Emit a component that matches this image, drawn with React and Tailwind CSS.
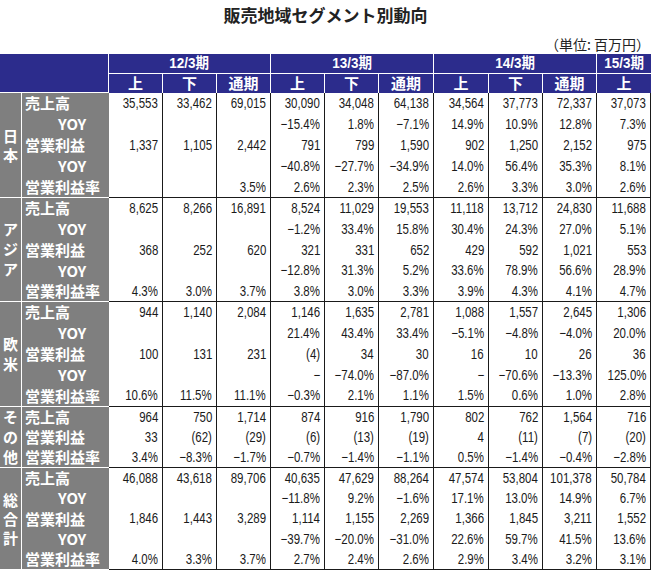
import React from "react";

const sections = [
  {
    region: ["日", "本"],
    lead: "leading-[19px]",
    span: "row-span-5",
    rows: [
      ["売上高", ["35,553", "33,462", "69,015", "30,090", "34,048", "64,138", "34,564", "37,773", "72,337", "37,073"]],
      ["YOY", ["", "", "", "−15.4%", "1.8%", "−7.1%", "14.9%", "10.9%", "12.8%", "7.3%"]],
      ["営業利益", ["1,337", "1,105", "2,442", "791", "799", "1,590", "902", "1,250", "2,152", "975"]],
      ["YOY", ["", "", "", "−40.8%", "−27.7%", "−34.9%", "14.0%", "56.4%", "35.3%", "8.1%"]],
      ["営業利益率", ["", "", "3.5%", "2.6%", "2.3%", "2.5%", "2.6%", "3.3%", "3.0%", "2.6%"]],
    ],
  },
  {
    region: ["ア", "ジ", "ア"],
    lead: "leading-[20px]",
    span: "row-span-5",
    rows: [
      ["売上高", ["8,625", "8,266", "16,891", "8,524", "11,029", "19,553", "11,118", "13,712", "24,830", "11,688"]],
      ["YOY", ["", "", "", "−1.2%", "33.4%", "15.8%", "30.4%", "24.3%", "27.0%", "5.1%"]],
      ["営業利益", ["368", "252", "620", "321", "331", "652", "429", "592", "1,021", "553"]],
      ["YOY", ["", "", "", "−12.8%", "31.3%", "5.2%", "33.6%", "78.9%", "56.6%", "28.9%"]],
      ["営業利益率", ["4.3%", "3.0%", "3.7%", "3.8%", "3.0%", "3.3%", "3.9%", "4.3%", "4.1%", "4.7%"]],
    ],
  },
  {
    region: ["欧", "米"],
    lead: "leading-[20px]",
    span: "row-span-5",
    rows: [
      ["売上高", ["944", "1,140", "2,084", "1,146", "1,635", "2,781", "1,088", "1,557", "2,645", "1,306"]],
      ["YOY", ["", "", "", "21.4%", "43.4%", "33.4%", "−5.1%", "−4.8%", "−4.0%", "20.0%"]],
      ["営業利益", ["100", "131", "231", "(4)", "34", "30", "16", "10", "26", "36"]],
      ["YOY", ["", "", "", "−", "−74.0%", "−87.0%", "−", "−70.6%", "−13.3%", "125.0%"]],
      ["営業利益率", ["10.6%", "11.5%", "11.1%", "−0.3%", "2.1%", "1.1%", "1.5%", "0.6%", "1.0%", "2.8%"]],
    ],
  },
  {
    region: ["そ", "の", "他"],
    lead: "leading-[20px]",
    span: "row-span-3",
    rows: [
      ["売上高", ["964", "750", "1,714", "874", "916", "1,790", "802", "762", "1,564", "716"]],
      ["営業利益", ["33", "(62)", "(29)", "(6)", "(13)", "(19)", "4", "(11)", "(7)", "(20)"]],
      ["営業利益率", ["3.4%", "−8.3%", "−1.7%", "−0.7%", "−1.4%", "−1.1%", "0.5%", "−1.4%", "−0.4%", "−2.8%"]],
    ],
  },
  {
    region: ["総", "合", "計"],
    lead: "leading-[19px]",
    span: "row-span-5",
    rows: [
      ["売上高", ["46,088", "43,618", "89,706", "40,635", "47,629", "88,264", "47,574", "53,804", "101,378", "50,784"]],
      ["YOY", ["", "", "", "−11.8%", "9.2%", "−1.6%", "17.1%", "13.0%", "14.9%", "6.7%"]],
      ["営業利益", ["1,846", "1,443", "3,289", "1,114", "1,155", "2,269", "1,366", "1,845", "3,211", "1,552"]],
      ["YOY", ["", "", "", "−39.7%", "−20.0%", "−31.0%", "22.6%", "59.7%", "41.5%", "13.6%"]],
      ["営業利益率", ["4.0%", "3.3%", "3.7%", "2.7%", "2.4%", "2.6%", "2.9%", "3.4%", "3.2%", "3.1%"]],
    ],
  },
];

const periods = [
  { label: "12/3期", cls: "col-span-3 border-r" },
  { label: "13/3期", cls: "col-span-3 border-r" },
  { label: "14/3期", cls: "col-span-3 border-r" },
  { label: "15/3期", cls: "col-span-1" },
];
const subs = ["上", "下", "通期", "上", "下", "通期", "上", "下", "通期", "上"];

const jp = "font-['Noto_Sans_CJK_JP',sans-serif]";
const num = "font-['Liberation_Sans','Noto_Sans_CJK_JP',sans-serif]";

export default function App() {
  return (
    <div className="w-[651px] h-[572px] bg-white text-[#1a1a1a]">
      <div className={`h-[30px] flex items-center justify-center ${jp} font-bold text-[17px] text-[#222]`}>
        販売地域セグメント別動向
      </div>
      <div className={`h-[24px] flex items-center justify-end pt-[4px] pr-[1px] ${jp} text-[14px] text-[#222]`}>
        （単位: 百万円）
      </div>
      <div className="grid grid-cols-[22px_87px_repeat(5,54px)_55px_55px_repeat(3,54px)] grid-rows-[20px_19px_repeat(5,21px)_repeat(5,20.8px)_repeat(5,21px)_repeat(3,20.33px)_repeat(5,20.4px)]">
        <div className="row-span-2 col-span-2 bg-[#2c2c8c] border-r border-b border-white" />
        {periods.map((p, i) => (
          <div
            key={i}
            className={`${p.cls} bg-[#2c2c8c] border-b border-white flex items-center justify-center text-white font-bold text-[15px] ${num}`}
          >
            <span className="inline-block scale-x-[0.9]">{p.label}</span>
          </div>
        ))}
        {subs.map((s, i) => (
          <div
            key={i}
            className={`bg-[#2c2c8c] ${i < 9 ? "border-r" : ""} border-white flex items-center justify-center text-white font-bold text-[15px] ${jp}`}
          >
            {s}
          </div>
        ))}
        {sections.map((sec, si) => (
          <React.Fragment key={si}>
            <div
              className={`${sec.span} bg-[#7f7f7f] border-r border-b border-white flex flex-col items-center justify-center text-white font-bold text-[15px] ${sec.lead} ${jp}`}
            >
              {sec.region.map((c, ci) => (
                <span key={ci}>{c}</span>
              ))}
            </div>
            {sec.rows.map(([label, vals], ri) => {
              const last = ri === sec.rows.length - 1;
              return (
                <React.Fragment key={ri}>
                  <div
                    className={`bg-[#7f7f7f] ${last ? "border-b border-white" : ""} flex items-center text-white font-bold text-[15px] whitespace-nowrap ${jp} ${label === "YOY" ? "pl-[36px]" : "pl-[3px]"}`}
                  >
                    {label}
                  </div>
                  {vals.map((v, vi) => (
                    <div
                      key={vi}
                      className={`border-r ${last ? "border-b" : ""} border-[#1a1a1a] flex items-center justify-end pr-[4px] text-[14px] ${num}`}
                    >
                      <span className="inline-block whitespace-nowrap scale-x-[0.82] origin-right">{v}</span>
                    </div>
                  ))}
                </React.Fragment>
              );
            })}
          </React.Fragment>
        ))}
      </div>
    </div>
  );
}
